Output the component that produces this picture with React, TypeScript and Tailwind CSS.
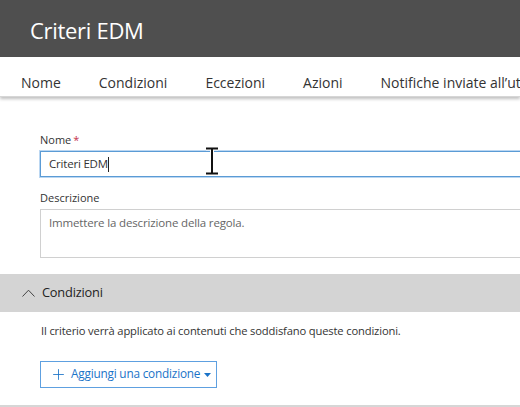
import { Plus } from "lucide-react";

const tabs = ["Nome", "Condizioni", "Eccezioni", "Azioni", "Notifiche inviate all’utente"];

export default function App() {
  return (
    <div
      className="w-[520px] h-[407px] overflow-hidden bg-white text-[#333333]"
      style={{ fontFamily: '"Open Sans", "Noto Sans", sans-serif' }}
    >
      {/* Header */}
      <div className="h-[57px] bg-[#4f4f4f] flex items-center pl-[30px]">
        <h1 className="text-[22px] text-white tracking-[-0.3px] leading-none mt-[2px]">Criteri EDM</h1>
      </div>

      {/* Tabs */}
      <div className="h-[40px] flex items-center pl-[21px] gap-[38px] whitespace-nowrap shadow-[0_2px_3px_rgba(0,0,0,0.25)] border-b border-[#d6d6d6] relative">
        {tabs.map((t) => (
          <span key={t} className="text-[14px] text-[#333333] pt-[11px]">
            {t}
          </span>
        ))}
      </div>

      {/* Form */}
      <div className="pl-[40px] pt-[36px] w-[640px]">
        <label className="block text-[11px] leading-[14px] text-[#333333]">
          Nome<span className="text-[#c4314b] ml-[2px]">*</span>
        </label>
        <div className="relative mt-[4px] h-[26px] border border-[#5b9bd5] shadow-[0_0_0_1px_rgba(120,175,230,0.5)] flex items-center pl-[8px]">
          <span className="text-[11.5px] text-[#333333] tracking-[-0.2px]">Criteri EDM</span>
          <span className="w-px h-[15px] bg-[#222222]" />
          {/* I-beam mouse cursor */}
          <svg className="absolute left-[163px] top-[-5px]" width="16" height="28" viewBox="0 0 16 28">
            <path d="M2 1.5h12M2 26.5h12M8 1.5v25" stroke="#fff" strokeWidth="4" />
            <path d="M2 1.5h12M2 26.5h12M8 1.5v25" stroke="#111" strokeWidth="2" />
          </svg>
        </div>

        <label className="block mt-[14px] text-[11px] leading-[14px] text-[#333333]">Descrizione</label>
        <div className="mt-[4px] h-[49px] border border-[#d0d0d0] pl-[8px] pt-[5px]">
          <p className="text-[11.5px] leading-[16px] text-[#666666] tracking-[-0.15px]">
            Immettere la descrizione della regola.
          </p>
        </div>
      </div>

      {/* Conditions section */}
      <div className="mt-[16px] h-[38px] bg-[#d4d4d4] flex items-center pl-[22px] gap-[7px]">
        <svg width="13" height="8" viewBox="0 0 13 8">
          <path d="M0.5 7.5L6.5 1.2L12.5 7.5" fill="none" stroke="#444444" strokeWidth="1" />
        </svg>
        <span className="text-[12.8px] text-[#222222] tracking-[-0.2px]">Condizioni</span>
      </div>
      <div className="pl-[41px] pt-[11px]">
        <p className="text-[11.2px] text-[#333333] tracking-[-0.15px]">
          Il criterio verrà applicato ai contenuti che soddisfano queste condizioni.
        </p>
        <button className="mt-[21px] w-[177px] h-[27px] border border-[#5ea0e0] flex items-center pl-[9px] gap-[4px] text-[#1a73c8] ml-[-1px] whitespace-nowrap">
          <Plus className="w-[17px] h-[17px] shrink-0" strokeWidth={1.2} />
          <span className="text-[11.8px] tracking-[-0.2px]">Aggiungi una condizione</span>
          <svg width="7" height="4" viewBox="0 0 7 4" className="mt-[1px] shrink-0">
            <path d="M0 0h7L3.5 4z" fill="#1a73c8" />
          </svg>
        </button>
      </div>
      <div className="mt-[17px] border-t-2 border-[#d6d6d6]" />
    </div>
  );
}
